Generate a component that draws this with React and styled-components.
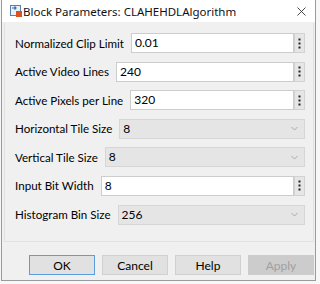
import React from 'react';
import styled, { createGlobalStyle } from 'styled-components';

const GlobalStyle = createGlobalStyle`
  html, body {
    margin: 0;
    padding: 0;
    background: #f7f7f7;
  }
  body {
    font-family: Lato, "Noto Sans", sans-serif;
  }
`;

const Window = styled.div`
  width: 315px;
  height: 281px;
  margin: 0 0 0 1px;
  border: 1px solid #9a9a9a;
  border-top: none;
  background: #f0f0f0;
  display: flex;
  flex-direction: column;
  box-sizing: border-box;
`;

const TitleBar = styled.div`
  height: 23px;
  background: #ffffff;
  display: flex;
  align-items: center;
  padding: 0 9px 0 8px;
  box-sizing: border-box;
  border-bottom: 1px solid #f0f0f0;
`;

const Title = styled.span`
  flex: 1;
  font-family: "Noto Sans", sans-serif;
  font-size: 11.5px;
  color: #111;
  margin-left: 1px;
  white-space: nowrap;
`;

const Body = styled.div`
  flex: 1;
  display: flex;
  flex-direction: column;
  padding: 0 1px 0 2px;
`;

const Panel = styled.div`
  height: 219px;
  border: 1px solid #e2e2e2;
  border-top: none;
  box-sizing: border-box;
  padding: 10px 8px 0 10px;
  display: flex;
  flex-direction: column;
  gap: 8.6px;
`;

const Row = styled.div`
  display: flex;
  align-items: center;
  height: 20px;
  gap: 7px;
`;

const Label = styled.span`
  font-size: 11.6px;
  color: #000;
  white-space: nowrap;
`;

const Field = styled.div`
  flex: 1;
  display: flex;
  height: 20px;
`;

const TextBox = styled.div`
  flex: 1;
  height: 20px;
  box-sizing: border-box;
  background: #fff;
  border: 1px solid #cdcdcd;
  font-size: 12px;
  line-height: 18px;
  padding-left: 3px;
`;

const MoreButton = styled.div`
  width: 11px;
  height: 20px;
  box-sizing: border-box;
  background: #e6e6e6;
  border: 1px solid #d2d2d2;
  display: flex;
  align-items: center;
  justify-content: center;
`;

const Select = styled.div`
  flex: 1;
  height: 20px;
  box-sizing: border-box;
  background: #e5e5e5;
  border: 1px solid #d6d6d6;
  font-size: 12px;
  line-height: 18px;
  padding-left: 3px;
  display: flex;
  justify-content: space-between;
  align-items: center;
  padding-right: 6px;
`;

const Footer = styled.div`
  display: flex;
  justify-content: flex-end;
  gap: 7px;
  padding: 13px 0 0 0;
`;

const Button = styled.div`
  width: 66px;
  height: 20px;
  box-sizing: border-box;
  background: ${(p) => (p.disabled ? '#cccccc' : '#e1e1e1')};
  border: 1px solid ${(p) => (p.primary ? '#5c9de0' : p.disabled ? '#cccccc' : '#d0d0d0')};
  color: ${(p) => (p.disabled ? '#a0a0a0' : '#000')};
  font-size: 12px;
  display: flex;
  align-items: center;
  justify-content: center;
`;

const BlockIcon = () => (
  <svg width="12" height="12" viewBox="0 0 12 12">
    <rect x="0.5" y="0.5" width="10" height="10" fill="#e8f0f8" stroke="#5b7fa6" />
    <path d="M2 3h4M4.5 1.5 6 3 4.5 4.5" stroke="#2e6fb5" strokeWidth="1.2" fill="none" />
    <rect x="6" y="6" width="6" height="6" fill="#d9531e" />
  </svg>
);

const CloseIcon = () => (
  <svg width="9" height="9" viewBox="0 0 9 9">
    <path d="M0.5 0.5 8.5 8.5M8.5 0.5 0.5 8.5" stroke="#333" strokeWidth="0.9" fill="none" />
  </svg>
);

const Dots = () => (
  <svg width="3" height="11" viewBox="0 0 3 11">
    <rect x="0.5" y="0.5" width="2" height="2" fill="#222" />
    <rect x="0.5" y="4.5" width="2" height="2" fill="#222" />
    <rect x="0.5" y="8.5" width="2" height="2" fill="#222" />
  </svg>
);

const Chevron = () => (
  <svg width="7" height="5" viewBox="0 0 7 5">
    <path d="M0.5 1 3.5 4 6.5 1" stroke="#a8a8a8" fill="none" />
  </svg>
);

const rows = [
  { label: 'Normalized Clip Limit', value: '0.01', kind: 'edit' },
  { label: 'Active Video Lines', value: '240', kind: 'edit' },
  { label: 'Active Pixels per Line', value: '320', kind: 'edit' },
  { label: 'Horizontal Tile Size', value: '8', kind: 'select' },
  { label: 'Vertical Tile Size', value: '8', kind: 'select' },
  { label: 'Input Bit Width', value: '8', kind: 'edit' },
  { label: 'Histogram Bin Size', value: '256', kind: 'select' },
];

export default function App() {
  return (
    <>
      <GlobalStyle />
      <Window>
        <TitleBar>
          <BlockIcon />
          <Title>Block Parameters: CLAHEHDLAlgorithm</Title>
          <CloseIcon />
        </TitleBar>
        <Body>
          <Panel>
            {rows.map((r) => (
              <Row key={r.label}>
                <Label>{r.label}</Label>
                {r.kind === 'edit' ? (
                  <Field>
                    <TextBox>{r.value}</TextBox>
                    <MoreButton>
                      <Dots />
                    </MoreButton>
                  </Field>
                ) : (
                  <Select>
                    {r.value}
                    <Chevron />
                  </Select>
                )}
              </Row>
            ))}
          </Panel>
          <Footer>
            <Button primary>OK</Button>
            <Button>Cancel</Button>
            <Button>Help</Button>
            <Button disabled>Apply</Button>
          </Footer>
        </Body>
      </Window>
    </>
  );
}
